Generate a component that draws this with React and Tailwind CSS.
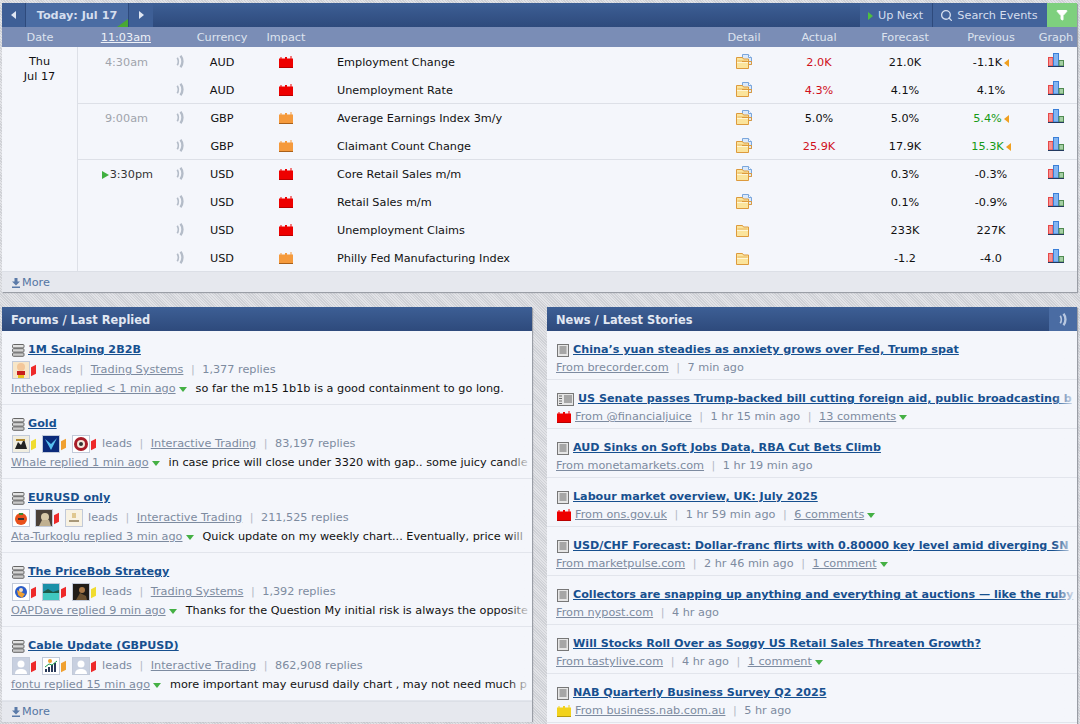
import React from "react";
import { Search, Filter } from "lucide-react";

const Speaker = ({ className = "" }) => (
  <svg viewBox="0 0 8 12" className={`w-[9px] h-[13px] ${className}`} fill="none" stroke="currentColor">
    <path d="M1 2.5c1.2 2 1.2 5 0 7" strokeWidth="1.5" />
    <path d="M4 .8c2.4 3 2.4 7.4 0 10.4" strokeWidth="2.2" />
  </svg>
);

const Impact = ({ level }) => {
  const colors = {
    high: ["#ee0000", "#b80000"],
    med: ["#f59a3c", "#a9601a"],
    low: ["#f2d21c", "#b59a10"],
  };
  const [fill, line] = colors[level];
  return (
    <svg viewBox="0 0 14 12" className="w-3.5 h-3">
      <path d="M0 12V2.5h1.5V1h1v1.5H6V1h2v1.5h3.5V0h1v2.5H14V12z" fill={fill} />
      <path d="M0 11.5h14" stroke={line} />
    </svg>
  );
};

const Folder = ({ doc }) => (
  <svg viewBox="0 0 16 15" className="w-4 h-[15px]">
    {doc && (
      <>
        <path d="M6.5.5h6l3 3v7h-9z" fill="#dbe9fa" stroke="#7aa6dc" />
        <path d="M12.5.5v3h3" fill="#fff" stroke="#7aa6dc" />
      </>
    )}
    <path d="M.5 3.5h6l1 1.5h5v9.5H.5z" fill="#fbe49c" stroke="#dd9a3c" />
    <path d="M1.5 7h10" stroke="#e8b860" />
    <path d="M1 8.5h11" stroke="#fff6d6" />
    {doc && <path d="M6 7.5h9.5v3H12" fill="none" stroke="#dd9a3c" />}
  </svg>
);

const Chart = () => (
  <svg viewBox="0 0 16 14" className="w-4 h-3.5">
    <rect x=".5" y="4.5" width="4.5" height="8.5" fill="#f79090" stroke="#e64848" />
    <rect x="5.5" y=".5" width="5" height="12.5" fill="#84b6f2" stroke="#3a7fd8" />
    <rect x="11" y="7.5" width="4.5" height="5.5" fill="#a4cfa4" stroke="#4f8a50" />
    <path d="M0 13.5h16" stroke="#23395f" />
  </svg>
);

const TopicIcon = () => (
  <svg viewBox="0 0 13 13" className="w-[13px] h-[13px] shrink-0">
    <rect x=".5" y=".5" width="11.5" height="3.4" rx="1" fill="#e2e2e2" stroke="#666" />
    <rect x=".5" y="4.7" width="11.5" height="3.4" rx="1" fill="#d4d4d4" stroke="#666" />
    <rect x=".5" y="8.9" width="11.5" height="3.4" rx="1" fill="#c8c8c8" stroke="#666" />
  </svg>
);

const StoryIcon = () => (
  <svg viewBox="0 0 12 13" className="w-3 h-[13px] shrink-0">
    <rect x=".5" y=".5" width="11" height="12" fill="#e6e6e6" stroke="#777" />
    <path d="M2.5 3h7M2.5 5h7M2.5 7h7M2.5 9h7" stroke="#666" />
  </svg>
);

const WideStoryIcon = () => (
  <svg viewBox="0 0 17 13" className="w-[17px] h-[13px] shrink-0">
    <rect x=".5" y=".5" width="16" height="12" fill="#e6e6e6" stroke="#777" />
    <path d="M2 3h3M2 5.5h3M2 8h3M2 10.5h3M7 3h8M7 5h8M7 7h8M7 9h8" stroke="#666" />
  </svg>
);

const Flag = ({ color }) => {
  const colors = { r: "bg-[#ee2a2a]", o: "bg-[#f0a030]", y: "bg-[#f0dc30]" };
  return <span className={`inline-block w-[5px] h-[9px] -skew-y-[25deg] ml-[1px] ${colors[color]}`} />;
};

const TriDown = () => (
  <span className="inline-block ml-[3px] w-0 h-0 border-x-[4px] border-x-transparent border-t-[5px] border-t-[#44b044]" />
);

// tiny stand-ins for the user avatars
const Avatar = ({ kind }) => {
  const art = {
    boy: <><rect width="16" height="16" fill="#f7e6c8" /><circle cx="8" cy="5" r="4" fill="#f3c79a" /><rect x="4" y="9" width="8" height="4" fill="#c81e1e" /><rect x="5" y="13" width="6" height="3" fill="#e8c020" /></>,
    mix: <><rect width="16" height="16" fill="#f0ede0" /><path d="M2 13l3-7 3 3 3-6 3 10z" fill="#222" /><rect x="3" y="3" width="9" height="2" fill="#b08a30" /></>,
    blue: <><rect width="16" height="16" fill="#0b2a7a" /><path d="M2 3l6 11 6-12-6 6z" fill="#58c0f0" /></>,
    target: <><rect width="16" height="16" fill="#fff" /><circle cx="8" cy="8" r="7" fill="#a81c28" /><circle cx="8" cy="8" r="4" fill="#f4e8dc" /><circle cx="8" cy="8" r="2" fill="#333" /></>,
    orange: <><rect width="16" height="16" fill="#fff" /><circle cx="8" cy="9" r="6" fill="#e8501c" /><path d="M6 3h4v2H6z" fill="#3a8a30" /><rect x="5" y="8" width="6" height="2" fill="#333" /></>,
    photo: <><rect width="16" height="16" fill="#4a4038" /><circle cx="9" cy="7" r="4" fill="#d8c8a8" /><path d="M3 16l3-6h7l2 6z" fill="#c0b090" /></>,
    logo: <><rect width="16" height="16" fill="#f8f2e2" /><rect x="6" y="3" width="4" height="5" fill="#e0c890" /><rect x="3" y="10" width="10" height="2" fill="#a89878" /></>,
    wave: <><rect width="16" height="16" fill="#fff" /><circle cx="8" cy="8" r="6" fill="#2a5cc8" /><path d="M4 6l8 4-3 4-4-3z" fill="#f0a030" /><circle cx="8" cy="6" r="2" fill="#f8e0c0" /></>,
    sea: <><rect width="16" height="16" fill="#1a90a8" /><rect y="9" width="16" height="7" fill="#40c8c0" /><path d="M0 8l5-3 5 3 6-2v3H0z" fill="#1c5a48" /></>,
    dark: <><rect width="16" height="16" fill="#201c18" /><circle cx="9" cy="6" r="3" fill="#a87848" /><path d="M3 16l4-7 6 3 1 4z" fill="#6a5030" /></>,
    blank: <><rect width="16" height="16" fill="#c8d0e0" /><circle cx="8" cy="6" r="3.5" fill="#fff" /><path d="M2 16c0-4 3-5 6-5s6 1 6 5z" fill="#fff" /></>,
    bars: <><rect width="16" height="16" fill="#fff" /><path d="M2 14V11h2v3zM5 14V9h2v5zM8 14V7h2v7zM11 14V5h2v9z" fill="#2a3a5a" /><path d="M2 9l4-3 3 1 5-4" stroke="#20a050" fill="none" /><circle cx="7" cy="3" r="2" fill="#f0a030" /></>,
  };
  return (
    <span className="inline-block w-[18px] h-[18px] border border-[#c2cad9] shrink-0">
      <svg viewBox="0 0 16 16" className="w-4 h-4 block">{art[kind]}</svg>
    </span>
  );
};

const events = [
  { time: "4:30am", cur: "AUD", level: "high", name: "Employment Change", actual: "2.0K", actualColor: "text-[#d0101c]", forecast: "21.0K", prev: "-1.1K", rev: true, doc: true },
  { cur: "AUD", level: "high", name: "Unemployment Rate", actual: "4.3%", actualColor: "text-[#d0101c]", forecast: "4.1%", prev: "4.1%", doc: true },
  { time: "9:00am", cur: "GBP", level: "med", name: "Average Earnings Index 3m/y", actual: "5.0%", forecast: "5.0%", prev: "5.4%", prevColor: "text-[#169a16]", rev: true, doc: true, start: true },
  { cur: "GBP", level: "med", name: "Claimant Count Change", actual: "25.9K", actualColor: "text-[#d0101c]", forecast: "17.9K", prev: "15.3K", prevColor: "text-[#169a16]", rev: true, doc: true },
  { time: "3:30pm", next: true, cur: "USD", level: "high", name: "Core Retail Sales m/m", forecast: "0.3%", prev: "-0.3%", doc: true, start: true },
  { cur: "USD", level: "high", name: "Retail Sales m/m", forecast: "0.1%", prev: "-0.9%", doc: true },
  { cur: "USD", level: "high", name: "Unemployment Claims", forecast: "233K", prev: "227K" },
  { cur: "USD", level: "med", name: "Philly Fed Manufacturing Index", forecast: "-1.2", prev: "-4.0" },
];

const threads = [
  { title: "1M Scalping 2B2B", leads: [["boy", "r"]], cat: "Trading Systems", replies: "1,377", who: "Inthebox replied < 1 min ago", text: "so far the m15 1b1b is a good containment to go long." },
  { title: "Gold", leads: [["mix", "y"], ["blue", "o"], ["target", "r"]], cat: "Interactive Trading", replies: "83,197", who: "Whale replied 1 min ago", text: "in case price will close under 3320 with gap.. some juicy candle" },
  { title: "EURUSD only", leads: [["orange"], ["photo", "r"], ["logo"]], cat: "Interactive Trading", replies: "211,525", who: "Ata-Turkoglu replied 3 min ago", text: "Quick update on my weekly chart... Eventually, price will" },
  { title: "The PriceBob Strategy", leads: [["wave", "r"], ["sea", "r"], ["dark", "y"]], cat: "Trading Systems", replies: "1,392", who: "OAPDave replied 9 min ago", text: "Thanks for the Question My initial risk is always the opposite" },
  { title: "Cable Update (GBPUSD)", leads: [["blank", "r"], ["bars", "o"], ["blank", "r"]], cat: "Interactive Trading", replies: "862,908", who: "fontu replied 15 min ago", text: "more important may eurusd daily chart , may not need much p" },
];

const stories = [
  { title: "China’s yuan steadies as anxiety grows over Fed, Trump spat", from: "From brecorder.com", age: "7 min ago" },
  { title: "US Senate passes Trump-backed bill cutting foreign aid, public broadcasting b", from: "From @financialjuice", age: "1 hr 15 min ago", comments: "13 comments", wide: true, level: "high" },
  { title: "AUD Sinks on Soft Jobs Data, RBA Cut Bets Climb", from: "From monetamarkets.com", age: "1 hr 19 min ago" },
  { title: "Labour market overview, UK: July 2025", from: "From ons.gov.uk", age: "1 hr 59 min ago", comments: "6 comments", level: "high" },
  { title: "USD/CHF Forecast: Dollar-franc flirts with 0.80000 key level amid diverging SN", from: "From marketpulse.com", age: "2 hr 46 min ago", comments: "1 comment" },
  { title: "Collectors are snapping up anything and everything at auctions — like the ruby", from: "From nypost.com", age: "4 hr ago" },
  { title: "Will Stocks Roll Over as Soggy US Retail Sales Threaten Growth?", from: "From tastylive.com", age: "4 hr ago", comments: "1 comment" },
  { title: "NAB Quarterly Business Survey Q2 2025", from: "From business.nab.com.au", age: "5 hr ago", level: "low" },
];

const calCols = "grid grid-cols-[82px_40px_44px_84px_1fr_60px_90px_82px_90px_40px] pr-[1px]";
const barBg = "bg-gradient-to-b from-[#3d5f95] to-[#2e4a7c]";
const Sep = () => <span className="mx-[7.5px] text-[#b4bac6]">|</span>;

const More = ({ tight }) => (
  <div className={`h-[21px] ${tight ? "" : "pt-[2px]"} bg-[#e6e8ee] border-t border-[#dcdfe6] flex items-center pl-[10px] text-[#5576a3] text-[11.25px] leading-4 shrink-0`}>
    <svg viewBox="0 0 8 10" className="w-2 h-2.5 text-[#5a7aa8]" fill="currentColor">
      <path d="M2.5 0h3v3.5H8L4 7.5 0 3.5h2.5zM0 8.5h8V10H0z" />
    </svg>
    <span className="ml-[2px]">More</span>
  </div>
);

const PanelHeader = ({ title, children }) => (
  <div className={`h-6 ${barBg} flex items-center justify-between pl-[9px] text-[#e2e8f3] font-bold text-[11.4px] leading-4 shrink-0`}>
    <span className="pt-[1px]">{title}</span>
    {children}
  </div>
);

const Fade = () => (
  <div className="absolute top-0 bottom-0 right-0 w-6 bg-gradient-to-r from-transparent to-[#f4f6fb]" />
);

const Calendar = () => (
  <div className="bg-[#f4f6fb] shadow-[1px_1px_1px_#9a9ea6]">
    <div className={`h-6 ${barBg} flex items-stretch text-[#d5deee] text-[11.25px] leading-4`}>
      <button className="w-6 flex items-center justify-center bg-[#3e5f96] border-r border-[#2e4a7c]">
        <span className="w-0 h-0 border-y-[4px] border-y-transparent border-r-[5px] border-r-[#dfe6f2]" />
      </button>
      <div className="relative w-[103px] pt-[2px] flex items-center justify-center bg-[#4a6ca3] font-bold border-r border-[#2e4a7c]">
        Today: Jul 17
        <span className="absolute right-0 bottom-0 w-0 h-0 border-l-[11px] border-l-transparent border-b-[8px] border-b-[#48a832]" />
      </div>
      <button className="w-6 flex items-center justify-center bg-[#3e5f96]">
        <span className="w-0 h-0 border-y-[4px] border-y-transparent border-l-[5px] border-l-[#dfe6f2]" />
      </button>
      <div className="flex-1" />
      <div className="w-[73px] pt-[2px] pr-[1px] flex items-center justify-center bg-[#42639b] border-r border-[#2e4a7c]">
        <span className="w-0 h-0 border-y-[4px] border-y-transparent border-l-[5px] border-l-[#4ec040] mr-[5px]" />
        Up Next
      </div>
      <div className="w-[114px] pt-[2px] pr-[2px] flex items-center justify-center bg-[#42639b]">
        <Search size={13} strokeWidth={2.5} className="mr-[4px] -mt-[2px]" />
        Search Events
      </div>
      <div className="w-[30px] flex items-center justify-center bg-[#7ed07e]">
        <Filter size={12} fill="#fff" stroke="#fff" />
      </div>
    </div>
    <div className="flex h-[20px] pt-[2px] items-center bg-[#7a8db6] text-[#dde3ee] text-[11.25px] leading-4">
      <div className="w-[76px] text-center">Date</div>
      <div className={`flex-1 ${calCols} items-center`}>
        <span className="text-right pr-[9px] underline text-[#eef1f7]">11:03am</span>
        <span />
        <span className="flex justify-center whitespace-nowrap">Currency</span>
        <span className="flex justify-center">Impact</span>
        <span />
        <span className="flex justify-center">Detail</span>
        <span className="flex justify-center">Actual</span>
        <span className="flex justify-center">Forecast</span>
        <span className="flex justify-center">Previous</span>
        <span className="flex justify-center">Graph</span>
      </div>
    </div>
    <div className="flex text-[11.25px] leading-4 text-[#111]">
      <div className="w-[76px] pt-[7px] text-center leading-[15px] border-r border-[#dde0e7]">
        Thu<br />Jul 17
      </div>
      <div className="flex-1">
        {events.map((ev, i) => (
          <div key={i} className={`${calCols} h-7 items-center text-center ${ev.start ? "border-t border-[#dde0e7] pt-[3px]" : "pt-[4px]"}`}>
            <span className={`text-right flex items-center justify-end ${ev.next ? "text-[#333] pr-[7px]" : "text-[#a0a4ac] pr-[12px]"}`}>
              {ev.next && <span className="w-0 h-0 border-y-[4px] border-y-transparent border-l-[7px] border-l-[#40b040] mr-[1px]" />}
              {ev.time}
            </span>
            <span className="flex justify-center text-[#b4bcc8] mb-[4px]"><Speaker /></span>
            <span>{ev.cur}</span>
            <span className="flex justify-center mb-[2px]"><Impact level={ev.level} /></span>
            <span className="text-left pl-[9px]">{ev.name}</span>
            <span className="flex justify-center mb-[3px]"><Folder doc={ev.doc} /></span>
            <span className={ev.actualColor}>{ev.actual}</span>
            <span>{ev.forecast}</span>
            <span className={`flex items-center justify-center ${ev.prevColor || ""}`}>
              {ev.prev}
              {ev.rev && <span className="ml-[2px] w-0 h-0 border-y-[4px] border-y-transparent border-r-[5px] border-r-[#f0a020]" />}
            </span>
            <span className="flex justify-center mb-[6px]"><Chart /></span>
          </div>
        ))}
      </div>
    </div>
    <More />
  </div>
);

const Forums = () => (
  <div className="bg-[#f4f6fb] shadow-[1px_1px_1px_#9a9ea6] flex flex-col h-[414px]">
    <PanelHeader title="Forums / Last Replied" />
    <div className="flex-1">
      {threads.map((t) => (
        <div key={t.title} className="relative h-[74px] overflow-hidden border-b border-[#e2e5ec] pl-[9px] pt-[11px] text-[11.25px] leading-4 text-[#7d8ba0] whitespace-nowrap">
          <div className="flex items-center h-4">
            <span className="ml-[1px]"><TopicIcon /></span>
            <a className="ml-[3px] font-bold text-[11.16px] text-[#17508f] underline">{t.title}</a>
          </div>
          <div className="flex items-center h-[20px] mt-[2px] pl-[1px]">
            {t.leads.map(([kind, flag], i) => (
              <span key={i} className={`flex items-center ${flag ? "mr-[6px]" : "mr-[5px]"}`}>
                <Avatar kind={kind} />
                {flag && <Flag color={flag} />}
              </span>
            ))}
            <span>leads</span>
            <Sep />
            <a className="underline">{t.cat}</a>
            <Sep />
            <span>{t.replies} replies</span>
          </div>
          <div className="flex items-center h-[18px]">
            <a className="underline">{t.who}</a>
            <TriDown />
            <span className="ml-[9px] text-[#111]">{t.text}</span>
          </div>
          <Fade />
        </div>
      ))}
    </div>
    <More tight />
  </div>
);

const News = () => (
  <div className="bg-[#f4f6fb] shadow-[1px_1px_1px_#9a9ea6] flex flex-col h-[420px]">
    <PanelHeader title="News / Latest Stories">
      <span className="w-7 h-6 flex items-center justify-center bg-[#4a6ca3] text-[#b8c8e0]"><Speaker /></span>
    </PanelHeader>
    <div>
      {stories.map((s) => (
        <div key={s.title} className="relative h-[49px] overflow-hidden border-b border-[#e2e5ec] pl-[9px] pt-[11px] text-[11.25px] leading-4 text-[#7d8ba0] whitespace-nowrap">
          <div className="flex items-center h-4 pl-[1px]">
            {s.wide ? <WideStoryIcon /> : <StoryIcon />}
            <a className="ml-[4px] font-bold text-[11.16px] text-[#17508f] underline">{s.title}</a>
          </div>
          <div className="flex items-center h-[18px] mt-[1px]">
            {s.level && <span className="ml-[1px] mr-[4px] flex"><Impact level={s.level} /></span>}
            <a className="underline">{s.from}</a>
            <Sep />
            <span>{s.age}</span>
            {s.comments && (
              <>
                <Sep />
                <a className="underline">{s.comments}</a>
                <TriDown />
              </>
            )}
          </div>
          <Fade />
        </div>
      ))}
    </div>
  </div>
);

export default function App() {
  return (
    <div className="h-[724px] overflow-hidden pl-[2px] pr-[3px] pt-[3px] font-['DejaVu_Sans',sans-serif] bg-[repeating-linear-gradient(45deg,#cfd1d6_0,#cfd1d6_1px,#e2e3e7_1px,#e2e3e7_2px)]">
      <Calendar />
      <div className="grid grid-cols-[530px_530px] gap-[15px] mt-[15px]">
        <Forums />
        <News />
      </div>
    </div>
  );
}
